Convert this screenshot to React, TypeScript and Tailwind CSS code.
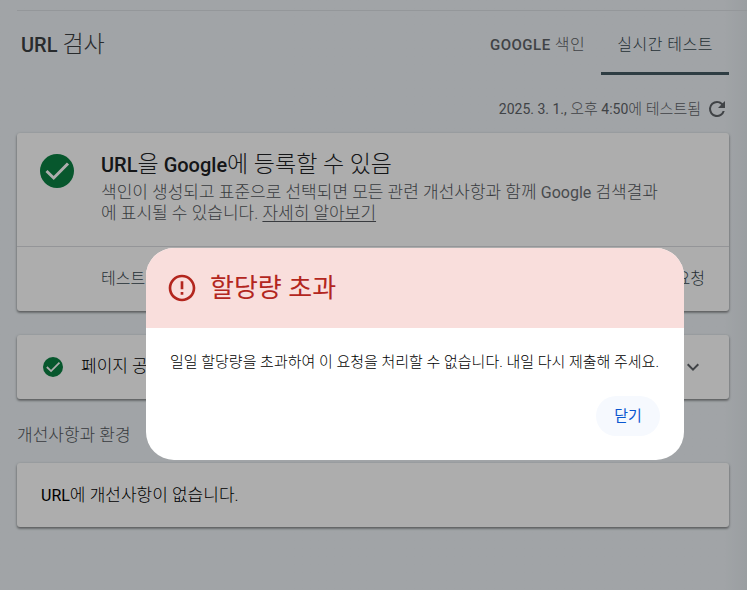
import React from "react";

function CheckBadge({ className }: { className: string }) {
  return (
    <svg viewBox="0 0 34 34" className={className} aria-hidden="true">
      <circle cx="17" cy="17" r="17" fill="#0b8043" />
      <path d="M6.5 17 13.7 24 28 9.5" fill="none" stroke="#fff" strokeWidth="3" />
    </svg>
  );
}

function Card({ children, className = "" }: { children: React.ReactNode; className?: string }) {
  return (
    <section
      className={`rounded-[3px] bg-white shadow-[0_1px_3px_rgba(0,0,0,0.35),0_2px_2px_rgba(0,0,0,0.2)] ${className}`}
    >
      {children}
    </section>
  );
}

function InspectionPage() {
  return (
    <main className="pt-[10px] pr-[18px] pl-[17px]">
      <hr className="-mr-[18px] border-t border-[#dadfe3]" />
      <header className="flex items-start justify-between">
        <h1 className="mt-[18px] pl-1 text-[20px] leading-8 font-medium text-[#3c4043]">
          URL <span className="text-[23px] font-light">검사</span>
        </h1>
        <nav className="flex text-[15px] leading-6 font-medium tracking-[0.5px]">
          <button type="button" className="h-16 px-4 pt-[3px] text-[#5f6368]">
            GOOGLE <span className="text-[16px] font-light">색인</span>
          </button>
          <button type="button" className="h-16 border-b-3 border-[#455a64] px-4 pt-[6px] text-[#37474f]">
            <span className="text-[16px] font-light">실시간 테스트</span>
          </button>
        </nav>
      </header>

      <div className="mt-[23px] flex h-[22px] items-center justify-end gap-1 text-[14px] text-[#5f6368]">
        <span>
          2025. 3. 1., <span className="text-[15px] font-light">오후</span> 4:50
          <span className="text-[15px] font-light">에 테스트됨</span>
        </span>
        <button type="button" aria-label="새로고침">
          <svg viewBox="0 0 24 24" className="size-6" fill="currentColor" aria-hidden="true">
            <path d="M17.65 6.35A7.96 7.96 0 0 0 12 4a8 8 0 1 0 7.73 10h-2.08A6 6 0 1 1 12 6c1.66 0 3.14.69 4.22 1.78L13 11h7V4l-2.35 2.35z" />
          </svg>
        </button>
      </div>

      <Card className="mt-[13px]">
        <div className="flex h-[114px] gap-[27px] border-b border-[#dadce0] pt-4 pr-15 pl-[23px]">
          <CheckBadge className="mt-[5px] size-[34px] shrink-0" />
          <div>
            <h2 className="h-8 text-[20px] leading-8 font-medium text-[#202124]">
              URL<span className="text-[23px] font-light">을</span> Google
              <span className="text-[23px] font-light">에 등록할 수 있음</span>
            </h2>
            <p className="mt-px text-[17px] leading-5 font-light text-[#54585d]">
              색인이 생성되고 표준으로 선택되면 모든 관련 개선사항과 함께{" "}
              <span className="text-[16px] font-normal text-[#6b6f74]">Google</span> 검색결과에 표시될 수 있습니다.{" "}
              <a href="#learn" className="underline underline-offset-2">
                자세히 알아보기
              </a>
            </p>
          </div>
        </div>
        <div className="flex h-16 items-center justify-between pr-6 pl-[84px] text-[16px] font-light text-[#37474f]">
          <button type="button">테스트된 페이지 보기</button>
          <button type="button">색인 생성 요청</button>
        </div>
      </Card>

      <Card className="mt-6">
        <button
          type="button"
          className="flex h-16 w-full items-center pr-6 pl-[26px] text-left text-[17px] font-light text-black"
        >
          <CheckBadge className="size-5" />
          <span className="ml-[18px] grow">페이지 공개 여부</span>
          <svg viewBox="0 0 24 24" className="size-6" fill="none" stroke="#5f6368" strokeWidth="2" aria-hidden="true">
            <path d="m6.7 9.3 5.3 5.3 5.3-5.3" />
          </svg>
        </button>
      </Card>

      <h2 className="mt-6 text-[17px] leading-6 font-light text-[#54585d]">개선사항과 환경</h2>

      <Card className="mt-4">
        <p className="h-16 px-6 py-5 text-[16px] leading-6 text-black">
          URL<span className="text-[17px] font-light">에 개선사항이 없습니다.</span>
        </p>
      </Card>
    </main>
  );
}

function QuotaDialog() {
  return (
    <div className="fixed inset-0 flex items-start justify-end bg-black/32 pt-[248px] pr-[63px]">
      <div
        role="dialog"
        aria-modal="true"
        aria-labelledby="quota-title"
        className="w-[538px] overflow-hidden rounded-[28px] bg-white"
      >
        <div className="flex h-20 items-center gap-3 bg-[#f9dedc] px-5 text-[#b3261e]">
          <svg viewBox="0 0 24 24" className="size-8" fill="currentColor" aria-hidden="true">
            <path d="M11 15h2v2h-2zm0-8h2v6h-2zm.99-5C6.47 2 2 6.48 2 12s4.47 10 9.99 10C17.52 22 22 17.52 22 12S17.52 2 11.99 2M12 20a8 8 0 1 1 0-16 8 8 0 0 1 0 16" />
          </svg>
          <h2 id="quota-title" className="text-[26px] leading-8">
            할당량 초과
          </h2>
        </div>
        <p className="px-6 pt-6 text-[15px] leading-5 font-light whitespace-nowrap text-black">
          일일 할당량을 초과하여 이 요청을 처리할 수 없습니다. 내일 다시 제출해 주세요.
        </p>
        <div className="flex justify-end px-6 py-6">
          <button type="button" className="h-10 w-16 rounded-full bg-[#f6f9fe] text-[15px] text-[#0b57d0]">
            닫기
          </button>
        </div>
      </div>
    </div>
  );
}

export default function App() {
  return (
    <div className="min-h-screen bg-linear-to-r from-[#edf2f6] from-97% to-[#e4e9ee] font-[Roboto,'Noto_Sans_CJK_KR',sans-serif]">
      <InspectionPage />
      <QuotaDialog />
    </div>
  );
}
